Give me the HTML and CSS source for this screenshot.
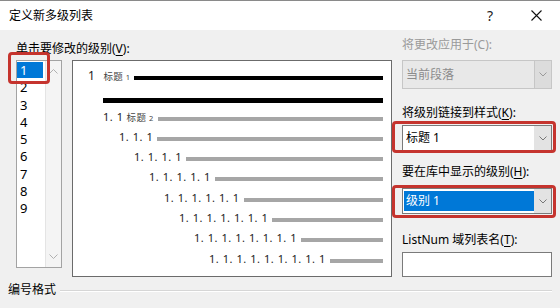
FILE: index.html
```html
<!DOCTYPE html>
<html>
<head>
<meta charset="utf-8">
<link rel="stylesheet" href="styles.css">
</head>
<body>
<div class="titlebar">
  <span class="title">定义新多级列表</span>
  <span class="help">?</span>
  <span class="close"><svg width="11" height="11" viewBox="0 0 11 11"><path d="M0.5 0.5 L10.5 10.5 M10.5 0.5 L0.5 10.5" stroke="#111" stroke-width="1.1" fill="none"/></svg></span>
</div>
<div class="main">
  <div class="left">
    <div class="label">单击要修改的级别(<u>V</u>):</div>
    <div class="lists">
      <div class="levels">
        <div class="level-items">
          <div class="lvl sel">1</div>
          <div class="lvl">2</div>
          <div class="lvl">3</div>
          <div class="lvl">4</div>
          <div class="lvl">5</div>
          <div class="lvl">6</div>
          <div class="lvl">7</div>
          <div class="lvl">8</div>
          <div class="lvl">9</div>
        </div>
        <div class="scroll">
          <svg width="9" height="5" viewBox="0 0 9 5"><polyline points="0.5,4.5 4.5,0.5 8.5,4.5" stroke="#b0b0b0" fill="none"/></svg>
          <svg width="9" height="5" viewBox="0 0 9 5"><polyline points="0.5,0.5 4.5,4.5 8.5,0.5" stroke="#b0b0b0" fill="none"/></svg>
        </div>
        <div class="mark mark-level"></div>
      </div>
      <div class="preview">
        <div class="row i1"><span class="num big">1</span><span class="sty s1">标题 <small>1</small></span><span class="bar black"></span></div>
        <div class="row i2"><span class="bar black thick"></span></div>
        <div class="row i2"><span class="num">1. 1</span><span class="sty s2">标题 <small>2</small></span><span class="bar"></span></div>
        <div class="row i3"><span class="num">1. 1. 1</span><span class="bar"></span></div>
        <div class="row i4"><span class="num">1. 1. 1. 1</span><span class="bar"></span></div>
        <div class="row i5"><span class="num">1. 1. 1. 1. 1</span><span class="bar"></span></div>
        <div class="row i6"><span class="num">1. 1. 1. 1. 1. 1</span><span class="bar"></span></div>
        <div class="row i7"><span class="num">1. 1. 1. 1. 1. 1. 1</span><span class="bar"></span></div>
        <div class="row i8"><span class="num">1. 1. 1. 1. 1. 1. 1. 1</span><span class="bar"></span></div>
        <div class="row i9"><span class="num">1. 1. 1. 1. 1. 1. 1. 1. 1</span><span class="bar"></span></div>
      </div>
    </div>
  </div>
  <div class="right">
    <div class="rlabel dis">将更改应用于(C):</div>
    <div class="combo disabled c1">
      <div class="val">当前段落</div>
      <div class="btn"><svg width="8" height="5" viewBox="0 0 8 5"><polyline points="0.5,0.5 4,4 7.5,0.5" stroke="#9a9a9a" fill="none"/></svg></div>
    </div>
    <div class="rlabel l2">将级别链接到样式(<u>K</u>):</div>
    <div class="combo c2">
      <div class="val">标题 1</div>
      <div class="btn"><svg width="8" height="5" viewBox="0 0 8 5"><polyline points="0.5,0.5 4,4 7.5,0.5" stroke="#777" fill="none"/></svg></div>
      <div class="mark mark-combo2"></div>
    </div>
    <div class="rlabel l3">要在库中显示的级别(<u>H</u>):</div>
    <div class="combo c3">
      <div class="val"><span class="hl">级别 1</span></div>
      <div class="btn"><svg width="8" height="5" viewBox="0 0 8 5"><polyline points="0.5,0.5 4,4 7.5,0.5" stroke="#777" fill="none"/></svg></div>
      <div class="mark mark-combo3"></div>
    </div>
    <div class="rlabel l4">ListNum 域列表名(<u>T</u>):</div>
    <div class="textbox"></div>
  </div>
</div>
<div class="group">
  <span class="gtitle">编号格式</span>
  <div class="rule"></div>
</div>
</body>
</html>
```

FILE: styles.css
```css
* { box-sizing: border-box; }
html, body { margin: 0; padding: 0; }
body {
  width: 560px;
  height: 308px;
  overflow: hidden;
  background: #f0f0f0;
  font-family: "Noto Sans", "Noto Sans CJK SC", sans-serif;
  font-size: 12px;
  color: #000;
}
u { text-decoration: underline; text-underline-offset: 2px; }

.titlebar {
  height: 30px;
  background: #fff;
  border-top: 1px solid #8a8a8a;
  display: flex;
  align-items: center;
  padding-left: 9px;
}
.title { flex: 1; font-size: 12px; line-height: 16px; }
.help { width: 14px; text-align: center; font-size: 14px; line-height: 16px; color: #222; margin-right: 29px; }
.close { width: 20px; height: 16px; display: flex; align-items: center; justify-content: center; margin-right: 14px; }

.main { display: flex; height: 252px; padding-top: 7px; }
.left { width: 392px; padding: 4px 0 0 16px; }
.label { height: 16px; line-height: 16px; white-space: nowrap; }
.lists { display: flex; gap: 10px; margin-top: 3px; align-items: flex-start; }

.levels {
  position: relative;
  width: 46px;
  height: 208px;
  border: 1px solid #a3a3a3;
  background: #fff;
  display: flex;
}
.level-items { width: 28px; padding-top: 1px; }
.lvl { height: 17.25px; line-height: 17px; padding-left: 3px; font-size: 13px; }
.lvl.sel { background: #0078d7; color: #fff; width: 26px; height: 16px; line-height: 16px; margin-bottom: 1.25px; }
.scroll {
  flex: 1;
  background: #f4f4f4;
  border-left: 1px solid #e4e4e4;
  display: flex;
  flex-direction: column;
  justify-content: space-between;
  align-items: center;
  padding: 8px 0 8px;
}

.preview {
  width: 320px;
  height: 217px;
  border: 1px solid #6b6b6b;
  background: #fff;
  padding: 5px 8px 0 0;
}
.row { display: flex; align-items: baseline; height: 20.3px; line-height: 20px; }
.num { font-size: 11px; letter-spacing: 0.55px; color: #222; white-space: pre; }
.num.big { font-size: 12px; }
.sty { font-size: 9.5px; color: #444; white-space: pre; letter-spacing: 0.3px; }
.sty small { font-size: 7.5px; }
.s1 { margin-left: 8px; }
.s2 { margin-left: 3px; }
.bar { flex: 1; height: 4px; background: #a6a6a6; margin-left: 4px; }
.bar.black { background: #000; }
.bar.thick { height: 5px; margin-left: 0; align-self: flex-start; margin-top: 12px; }
.i1 { padding-left: 15px; }
.i2 { padding-left: 30px; }
.i3 { padding-left: 46px; }
.i4 { padding-left: 61px; }
.i5 { padding-left: 76px; }
.i6 { padding-left: 91px; }
.i7 { padding-left: 106px; }
.i8 { padding-left: 121px; }
.i9 { padding-left: 136px; }

.right { width: 168px; padding: 0 8px 0 10px; }
.rlabel { height: 16px; line-height: 16px; white-space: nowrap; }
.rlabel.dis { color: #9a9a9a; }
.l2 { margin-top: 16px; }
.l3 { margin-top: 13px; }
.l4 { margin-top: 18px; }

.combo {
  position: relative;
  display: flex;
  height: 26px;
  border: 1px solid #7a7a7a;
  background: #fff;
  margin-top: 4px;
}
.combo .val { flex: 1; display: flex; align-items: center; padding-left: 3px; line-height: 16px; }
.combo .btn {
  width: 17px;
  background: #e3e3e3;
  display: flex;
  align-items: center;
  justify-content: center;
}
.combo.disabled { height: 29px; margin-top: 7px; background: #e8e8e8; border-color: #c6c6c6; color: #8c8c8c; }
.combo.disabled .btn { background: #dcdcdc; border-left: 1px solid #c6c6c6; }
.c3 { margin-top: 8px; }
.c3 .val { padding: 2px 0 2px 1px; align-items: stretch; }
.hl { flex: 1; background: #0078d7; color: #fff; display: flex; align-items: center; padding-left: 2px; }

.textbox { height: 25px; margin-top: 4px; border: 1px solid #7a7a7a; background: #fff; }

.mark {
  position: absolute;
  border: 3px solid #c5342e;
  border-radius: 4px;
  pointer-events: none;
}
.mark-level { left: -9px; top: -9px; width: 42px; height: 32px; }
.mark-combo2 { left: -11px; top: -5px; width: 164px; height: 32px; }
.mark-combo3 { left: -11px; top: -4px; width: 164px; height: 33px; }

.group { display: flex; align-items: center; height: 16px; padding-left: 8px; }
.gtitle { line-height: 16px; white-space: nowrap; }
.rule { flex: 1; height: 2px; border-top: 1px solid #d6d6d6; border-bottom: 1px solid #fff; margin: 1px 8px 0 4px; }
```
